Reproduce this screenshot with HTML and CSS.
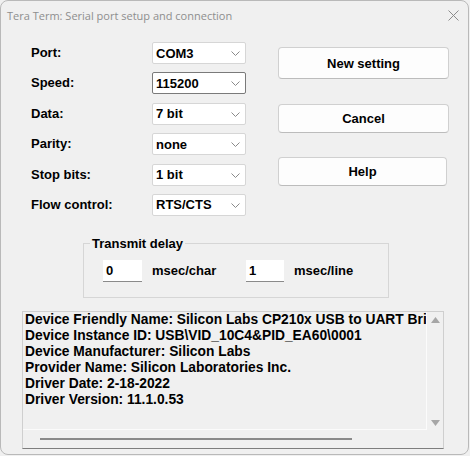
FILE: index.html
```html
<!DOCTYPE html>
<html lang="en">
<head>
<meta charset="utf-8">
<title>Tera Term: Serial port setup and connection</title>
<link rel="stylesheet" href="styles.css">
</head>
<body>
<div class="window">
  <div class="titlebar">
    <span class="title">Tera Term: Serial port setup and connection</span>
    <svg class="close" width="11" height="11" viewBox="0 0 11 11"><path d="M0.5 0.5 L10.5 10.5 M10.5 0.5 L0.5 10.5" stroke="#8c8c8c" stroke-width="1" fill="none"/></svg>
  </div>
  <div class="top">
    <div class="fields">
      <span class="label">Port:</span>
      <div class="select"><span>COM3</span><svg class="chev" width="9" height="5" viewBox="0 0 9 5"><path d="M0.5 0.5 L4.5 4.5 L8.5 0.5" stroke="#8a8a8a" fill="none"/></svg></div>
      <span class="label">Speed:</span>
      <div class="select focused"><span>115200</span><svg class="chev" width="9" height="5" viewBox="0 0 9 5"><path d="M0.5 0.5 L4.5 4.5 L8.5 0.5" stroke="#8a8a8a" fill="none"/></svg></div>
      <span class="label">Data:</span>
      <div class="select"><span>7 bit</span><svg class="chev" width="9" height="5" viewBox="0 0 9 5"><path d="M0.5 0.5 L4.5 4.5 L8.5 0.5" stroke="#8a8a8a" fill="none"/></svg></div>
      <span class="label">Parity:</span>
      <div class="select"><span>none</span><svg class="chev" width="9" height="5" viewBox="0 0 9 5"><path d="M0.5 0.5 L4.5 4.5 L8.5 0.5" stroke="#8a8a8a" fill="none"/></svg></div>
      <span class="label">Stop bits:</span>
      <div class="select"><span>1 bit</span><svg class="chev" width="9" height="5" viewBox="0 0 9 5"><path d="M0.5 0.5 L4.5 4.5 L8.5 0.5" stroke="#8a8a8a" fill="none"/></svg></div>
      <span class="label">Flow control:</span>
      <div class="select"><span>RTS/CTS</span><svg class="chev" width="9" height="5" viewBox="0 0 9 5"><path d="M0.5 0.5 L4.5 4.5 L8.5 0.5" stroke="#8a8a8a" fill="none"/></svg></div>
    </div>
    <div class="buttons">
      <button class="btn btn-new">New setting</button>
      <button class="btn btn-cancel">Cancel</button>
      <button class="btn btn-help">Help</button>
    </div>
  </div>
  <fieldset class="delay">
    <legend>Transmit delay</legend>
    <div class="delay-row">
      <div class="input">0</div><span class="unit">msec/char</span>
      <div class="input input-2">1</div><span class="unit">msec/line</span>
    </div>
  </fieldset>
  <div class="info">
    <div class="info-text">
      <div>Device Friendly Name: Silicon Labs CP210x USB to UART Bridge (COM3)</div>
      <div>Device Instance ID: USB\VID_10C4&amp;PID_EA60\0001</div>
      <div>Device Manufacturer: Silicon Labs</div>
      <div>Provider Name: Silicon Laboratories Inc.</div>
      <div>Driver Date: 2-18-2022</div>
      <div>Driver Version: 11.1.0.53</div>
    </div>
    <div class="vscroll">
      <svg width="9" height="6" viewBox="0 0 9 6"><path d="M4.5 0 L9 6 L0 6 Z" fill="#a6a6a6"/></svg>
      <svg width="9" height="6" viewBox="0 0 9 6"><path d="M0 0 L9 0 L4.5 6 Z" fill="#a6a6a6"/></svg>
    </div>
    <div class="hscroll"><div class="thumb"></div></div>
    <div class="corner"></div>
  </div>
</div>
</body>
</html>
```

FILE: styles.css
```css
html, body {
  margin: 0;
  padding: 0;
  background: #f0f0f0;
}

.window {
  box-sizing: border-box;
  width: 469px;
  height: 455px;
  border: 1px solid #b9b9b9;
  border-radius: 8px;
  background: #f0f0f0;
  font-family: "Liberation Sans", Arial, sans-serif;
  font-weight: bold;
  font-size: 13px;
  color: #000;
  overflow: hidden;
}

.titlebar {
  height: 29px;
  display: flex;
  align-items: center;
  justify-content: space-between;
  padding: 0 9px 0 6px;
}

.title {
  font-family: "Open Sans", "Noto Sans", sans-serif;
  font-weight: normal;
  font-size: 11px;
  color: #8e8e8e;
}

.close {
  display: block;
}

.top {
  display: flex;
  padding-top: 12px;
}

.fields {
  margin-left: 30px;
  display: grid;
  grid-template-columns: 121px 94px;
  grid-auto-rows: 22px;
  row-gap: 8.4px;
  align-items: center;
}

.label {
  line-height: 22px;
}

.select {
  box-sizing: border-box;
  height: 22px;
  background: #fff;
  border: 1px solid #d6d6d6;
  border-radius: 2px;
  display: flex;
  align-items: center;
  justify-content: space-between;
  padding: 0 5px 0 3px;
}

.select.focused {
  border-color: #7a7a7a;
}

.chev {
  display: block;
  margin-top: 1px;
}

.buttons {
  margin-left: 32px;
  margin-top: 5px;
  display: flex;
  flex-direction: column;
  width: 171px;
}

.btn {
  box-sizing: border-box;
  font-family: "Liberation Sans", Arial, sans-serif;
  font-weight: bold;
  font-size: 13px;
  color: #000;
  background: #fdfdfd;
  border: 1px solid #d0d0d0;
  border-bottom-color: #bcbcbc;
  border-radius: 4px;
  padding: 0;
  margin: 0;
}

.btn-new {
  height: 32px;
}

.btn-cancel {
  height: 29px;
  margin-top: 25px;
}

.btn-help {
  height: 29px;
  margin-top: 24px;
  width: 169px;
}

.delay {
  box-sizing: border-box;
  margin: 21px 0 0 82px;
  width: 304px;
  padding: 0 0 15px 0;
  border: 1px solid #d6d6d6;
  border-radius: 0;
}

.delay legend {
  margin-left: 6px;
  padding: 0 2px;
  line-height: 14px;
}

.delay-row {
  display: flex;
  align-items: center;
  margin-top: 9px;
  padding-left: 19px;
}

.input {
  box-sizing: border-box;
  width: 39px;
  height: 22px;
  background: #fff;
  border-bottom: 1px solid #8a8a8a;
  padding: 0 3px;
  line-height: 21px;
}

.input-2 {
  width: 38px;
}

.unit {
  margin-left: 10px;
  width: 94px;
}

.info {
  box-sizing: border-box;
  margin: 13px 0 0 21px;
  width: 422px;
  height: 138px;
  border: 1px solid #cfcfcf;
  border-bottom-color: #7e7e7e;
  display: grid;
  grid-template-columns: 1fr 16px;
  grid-template-rows: 1fr 18px;
}

.info-text {
  border-right: 1px solid #fbfbfb;
  border-bottom: 1px solid #fbfbfb;
  padding: 0 0 0 2px;
  white-space: nowrap;
  overflow: hidden;
  font-size: 13.8px;
  line-height: 16px;
}

.vscroll {
  display: flex;
  flex-direction: column;
  justify-content: space-between;
  align-items: center;
  padding: 5px 0 4px 0;
}

.vscroll svg {
  display: block;
}

.hscroll {
  display: flex;
  align-items: center;
  padding-left: 17px;
}

.thumb {
  width: 312px;
  height: 2px;
  background: #8a8a8a;
}
```
